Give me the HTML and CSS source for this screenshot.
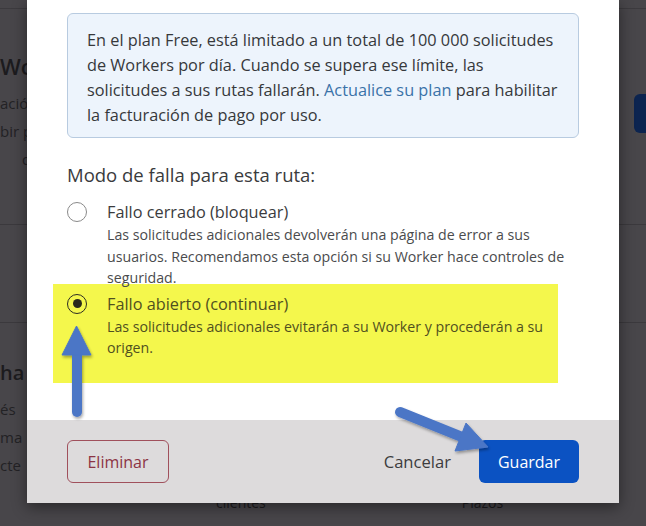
FILE: index.html
```html
<!DOCTYPE html>
<html lang="es">
<head>
<meta charset="utf-8">
<title>Modo de falla</title>
<link rel="stylesheet" href="styles.css">
</head>
<body>
<div class="page">
  <section class="bg-top">
    <div class="bg-left">
      <h2 class="bg-title">Workers</h2>
      <p class="bg-line">ación de rutas</p>
      <p class="bg-line">bir peticiones</p>
      <p class="bg-line indent">de</p>
    </div>
    <div class="bg-right"><span class="bg-btn"></span></div>
  </section>
  <section class="bg-mid"></section>
  <section class="bg-bottom">
    <h3 class="bg-sub">ha</h3>
    <p class="bg-line">és</p>
    <p class="bg-line">ma</p>
    <p class="bg-line">cte</p>
    <div class="bg-cols">
      <span>clientes</span>
      <span>Plazos</span>
    </div>
  </section>
</div>

<div class="modal">
  <div class="modal-body">
    <div class="info">
      <p class="info-text">En el plan Free, está limitado a un total de 100&nbsp;000 solicitudes de Workers por día. Cuando se supera ese límite, las solicitudes a sus rutas fallarán. <a href="#" class="link">Actualice su plan</a> para habilitar la facturación de pago por uso.</p>
    </div>
    <h4 class="legend">Modo de falla para esta ruta:</h4>
    <label class="option">
      <span class="radio"></span>
      <span class="opt-text">
        <span class="opt-label">Fallo cerrado (bloquear)</span>
        <span class="opt-desc">Las solicitudes adicionales devolverán una página de error a sus usuarios. Recomendamos esta opción si su Worker hace controles de seguridad.</span>
      </span>
    </label>
    <label class="option highlight">
      <span class="radio checked"></span>
      <span class="opt-text">
        <span class="opt-label">Fallo abierto (continuar)</span>
        <span class="opt-desc">Las solicitudes adicionales evitarán a su Worker y procederán a su origen.</span>
      </span>
    </label>
  </div>
  <div class="modal-footer">
    <button class="btn btn-danger">Eliminar</button>
    <div class="footer-right">
      <button class="btn btn-link">Cancelar</button>
      <button class="btn btn-primary">Guardar</button>
    </div>
  </div>
</div>

<svg class="annot" width="646" height="526" viewBox="0 0 646 526" aria-hidden="true">
  <defs>
    <filter id="sh" x="-20%" y="-20%" width="140%" height="140%">
      <feGaussianBlur in="SourceAlpha" stdDeviation="1.5"/>
      <feOffset dx="1" dy="1.5" result="b"/>
      <feComponentTransfer><feFuncA type="linear" slope="0.35"/></feComponentTransfer>
      <feMerge><feMergeNode/><feMergeNode in="SourceGraphic"/></feMerge>
    </filter>
  </defs>
  <g filter="url(#sh)" fill="#4b76c6" stroke="#4b76c6">
    <line x1="77" y1="412" x2="77" y2="352" stroke-width="10" stroke-linecap="round"/>
    <polygon points="76.5,326 91,355 62,355" stroke-width="1" stroke-linejoin="round"/>
    <line x1="400" y1="412" x2="462" y2="437" stroke-width="10" stroke-linecap="round"/>
    <polygon points="488,447 466,423 455,451" stroke-width="1" stroke-linejoin="round"/>
  </g>
</svg>
</body>
</html>
```

FILE: styles.css
```css
* { box-sizing: border-box; }

html, body {
  margin: 0;
  padding: 0;
}

body {
  width: 646px;
  height: 526px;
  overflow: hidden;
  position: relative;
  background: #48464a;
  font-family: "Open Sans", "Noto Sans", "Liberation Sans", sans-serif;
  color: #1d1c1f;
}

/* background page (dimmed) */
.page {
  display: flex;
  flex-direction: column;
  height: 526px;
}

.bg-top {
  display: flex;
  justify-content: space-between;
  height: 217px;
  border-top: 1px solid #3c3a3e;
  margin-top: 8px;
  border-bottom: 1px solid #3b393d;
}

.bg-left {
  padding-top: 42px;
}

.bg-title {
  margin: 0 0 8px;
  font-size: 22px;
  font-weight: 600;
  line-height: 30px;
  color: #1c1b1e;
}

.bg-line {
  margin: 0;
  font-size: 15px;
  line-height: 28px;
  color: #232225;
}

.indent { padding-left: 22px; }

.bg-right {
  padding-top: 85px;
}

.bg-btn {
  display: block;
  width: 20px;
  height: 39px;
  margin-right: -8px;
  border-radius: 6px;
  background: #0c2450;
}

.bg-mid {
  height: 98px;
  border-bottom: 1px solid #3b393d;
}

.bg-bottom {
  padding-top: 36px;
}

.bg-sub {
  margin: 0 0 8px;
  font-size: 20px;
  font-weight: 600;
  line-height: 28px;
  color: #1c1b1e;
}

.bg-cols {
  display: flex;
  gap: 196px;
  padding-left: 216px;
  margin-top: 14px;
  font-size: 14px;
  color: #1c1b1e;
}

/* modal (overlays the page) */
.modal {
  position: absolute;
  left: 27px;
  top: 0;
  width: 592px;
  height: 503px;
  display: flex;
  flex-direction: column;
  background: #ffffff;
  box-shadow: 0 4px 14px rgba(0, 0, 0, 0.45);
}

.modal-body {
  flex: 1;
  padding: 13px 40px 0;
}

.info {
  padding: 14px 13px 9px 19px;
  border: 1px solid #b8cbe0;
  border-radius: 6px;
  background: #edf4fc;
}

.info-text {
  margin: 0;
  font-size: 16.3px;
  line-height: 25px;
  color: #36383b;
}

.link {
  color: #3a72a8;
  text-decoration: none;
}

.legend {
  margin: 25px 0 13px;
  font-size: 18.5px;
  font-weight: 400;
  line-height: 24px;
  color: #3a3b3d;
}

.option {
  display: flex;
  gap: 20px;
  cursor: pointer;
}

.radio {
  flex: none;
  width: 20px;
  height: 20px;
  margin-top: 2px;
  border: 1px solid #8a8a8a;
  border-radius: 50%;
  background: #fff;
  display: flex;
  align-items: center;
  justify-content: center;
}

.radio.checked {
  border: 1.5px solid #2d2d22;
  background: transparent;
}

.radio.checked::after {
  content: "";
  width: 9px;
  height: 9px;
  border-radius: 50%;
  background: #2b2a1c;
}

.opt-text {
  display: flex;
  flex-direction: column;
}

.opt-label {
  font-size: 16.3px;
  line-height: 24px;
  color: #3a3b3d;
}

.opt-desc {
  font-size: 14.2px;
  line-height: 21.5px;
  color: #4a4b4d;
}

.highlight {
  margin: -5px 21px 0 -14px;
  padding: 8px 14px 24px;
  background: #f4f74c;
}

.highlight .opt-label,
.highlight .opt-desc {
  color: #505020;
}

.modal-footer {
  display: flex;
  justify-content: space-between;
  align-items: center;
  height: 83px;
  padding: 0 40px;
  background: #dddbdc;
}

.footer-right {
  display: flex;
  align-items: center;
  gap: 28px;
}

.btn {
  font-family: inherit;
  font-size: 16px;
  height: 43px;
  border-radius: 6px;
  cursor: pointer;
}

.btn-danger {
  width: 102px;
  border: 1px solid #a0505c;
  background: transparent;
  color: #8c3444;
}

.btn-link {
  padding: 0;
  border: 0;
  background: transparent;
  color: #3c3c3e;
  font-size: 16.6px;
}

.btn-primary {
  width: 100px;
  border: 0;
  background: #0b52c2;
  color: #ffffff;
}

.annot {
  position: absolute;
  left: 0;
  top: 0;
  pointer-events: none;
}
```
